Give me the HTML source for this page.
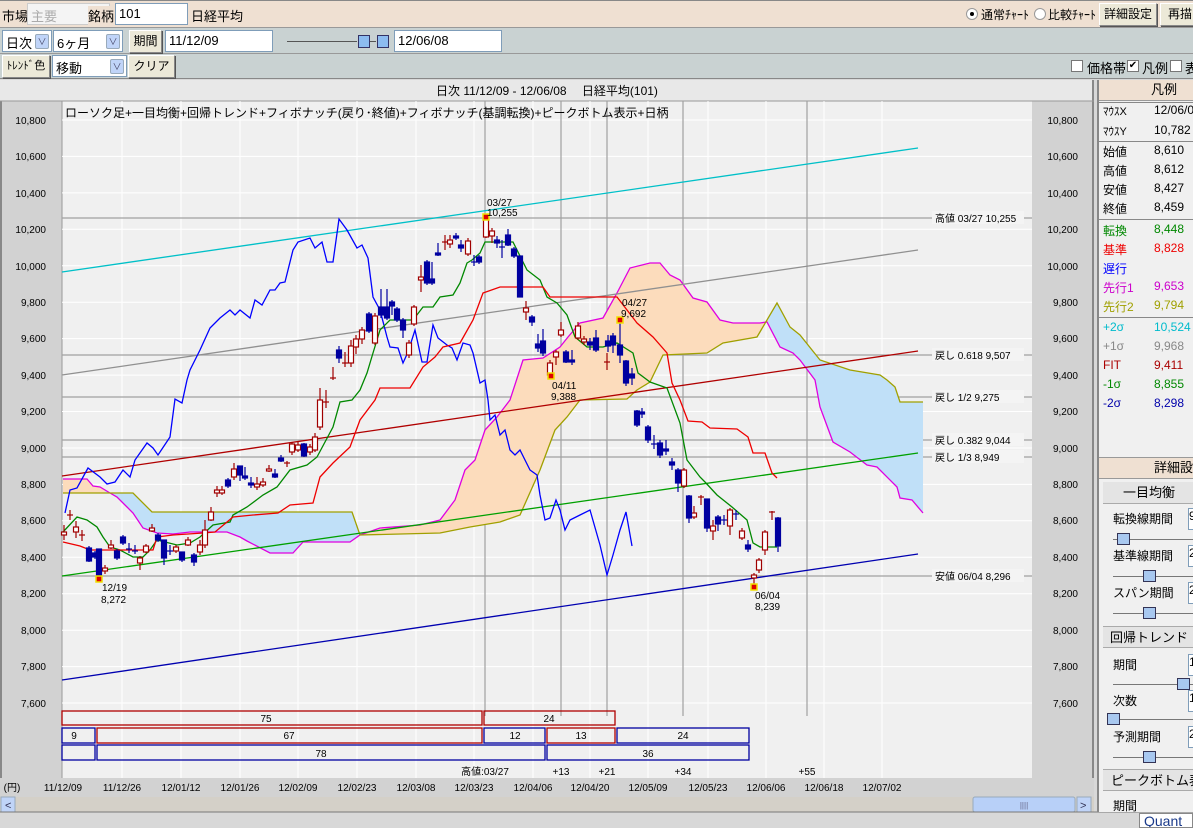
<!DOCTYPE html>
<html><head><meta charset="utf-8">
<style>
*{margin:0;padding:0;box-sizing:border-box}
body{width:1193px;height:828px;overflow:hidden;background:#d8d8d8;font-family:"Liberation Sans","Noto Sans CJK JP",sans-serif;font-size:12px;color:#000;position:relative}
.a{position:absolute}
.row{position:absolute;left:0;width:1193px}
.inp{position:absolute;background:#fff;border:1px solid #7f9db9;height:22px;padding:2px 3px;font-size:13px;white-space:nowrap}
.btn{position:absolute;background:#ece9d8;border:1px solid #888;border-top-color:#fff;border-left-color:#fff;height:23px;font-size:12px;line-height:21px;padding:0;text-align:center;white-space:nowrap;overflow:hidden;box-shadow:1px 1px 0 #555}
.dd{position:absolute;width:14px;height:15px;background:#c0d4f8;border:1px solid #9ab;border-radius:2px;top:3px;right:2px;font-size:9px;color:#446;text-align:center;line-height:14px}
.rp div{position:absolute;font-size:12px;white-space:nowrap}
</style></head><body>
<!-- row1 -->
<div class="row" style="top:0;height:28px;background:#efe0d2;border-top:1px solid #888;border-bottom:1px solid #999"></div>
<div class="a" style="left:2px;top:6px;font-size:13px">市場</div>
<div class="inp" style="left:27px;top:3px;width:83px;color:#aaa;border-color:#ccc;background:#f4f4f4">主要<div class="dd" style="background:#e4e4e4;border-color:#ddd;color:#bbb">∨</div></div>
<div class="a" style="left:88px;top:6px;font-size:13px;background:#efe0d2">銘柄</div>
<div class="inp" style="left:115px;top:3px;width:73px">101</div>
<div class="a" style="left:191px;top:6px;font-size:13px">日経平均</div>
<div class="a" style="left:966px;top:8px;width:12px;height:12px;border-radius:50%;background:#fff;border:1px solid #999"><div class="a" style="left:3px;top:3px;width:4px;height:4px;background:#000;border-radius:50%"></div></div>
<div class="a" style="left:981px;top:6px;font-size:12px">通常ﾁｬｰﾄ</div>
<div class="a" style="left:1034px;top:8px;width:12px;height:12px;border-radius:50%;background:#fff;border:1px solid #999"></div>
<div class="a" style="left:1048px;top:6px;font-size:12px">比較ﾁｬｰﾄ</div>
<div class="btn" style="left:1099px;top:3px;width:58px">詳細設定</div>
<div class="btn" style="left:1160px;top:3px;width:40px">再描</div>
<!-- row2 -->
<div class="row" style="top:28px;height:26px;background:#c9d2d2;border-bottom:1px solid #999"></div>
<div class="inp" style="left:2px;top:30px;width:50px">日次<div class="dd">∨</div></div>
<div class="inp" style="left:53px;top:30px;width:70px">6ヶ月<div class="dd">∨</div></div>
<div class="btn" style="left:129px;top:30px;width:33px">期間</div>
<div class="inp" style="left:165px;top:30px;width:108px">11/12/09</div>
<div class="a" style="left:287px;top:41px;width:70px;height:1px;background:#555"></div>
<div class="a" style="left:358px;top:35px;width:12px;height:13px;background:#8cbcf0;border:1px solid #336"></div>
<div class="a" style="left:370px;top:41px;width:6px;height:1px;background:#555"></div>
<div class="a" style="left:377px;top:35px;width:12px;height:13px;background:#8cbcf0;border:1px solid #336"></div>
<div class="inp" style="left:394px;top:30px;width:108px">12/06/08</div>
<!-- row3 -->
<div class="row" style="top:54px;height:25px;background:#c9d2d2;border-bottom:1px solid #888"></div>
<div class="btn" style="left:2px;top:55px;width:48px;font-size:11px">ﾄﾚﾝﾄﾞ色</div>
<div class="inp" style="left:52px;top:55px;width:75px">移動<div class="dd">∨</div></div>
<div class="btn" style="left:128px;top:55px;width:47px">クリア</div>
<div class="a" style="left:1071px;top:60px;width:12px;height:12px;background:#fff;border:1px solid #777"></div>
<div class="a" style="left:1087px;top:58px;font-size:13px">価格帯</div>
<div class="a" style="left:1127px;top:60px;width:12px;height:12px;background:#fff;border:1px solid #777;font-size:10px;line-height:10px;text-align:center">✔</div>
<div class="a" style="left:1142px;top:58px;font-size:13px">凡例</div>
<div class="a" style="left:1170px;top:60px;width:12px;height:12px;background:#fff;border:1px solid #777"></div>
<div class="a" style="left:1185px;top:58px;font-size:13px">表</div>

<!-- chart -->
<svg class="a" style="left:0;top:0" width="1193" height="828" xmlns="http://www.w3.org/2000/svg" font-family="Liberation Sans, Noto Sans CJK JP, sans-serif">
<rect x="0" y="80" width="1094" height="21" fill="#e8e8e8"/>
<text x="547" y="95" font-size="12" text-anchor="middle">日次 11/12/09 - 12/06/08　 日経平均(101)</text>
<rect x="0" y="101" width="62" height="677" fill="#d2d2d2"/>
<rect x="1032" y="101" width="61" height="677" fill="#d2d2d2"/>
<line x1="1" y1="101" x2="1" y2="812" stroke="#888" stroke-width="2"/>
<line x1="1093" y1="80" x2="1093" y2="812" stroke="#888" stroke-width="2"/>
<rect x="62" y="101" width="970" height="677" fill="#f0f0f0"/>
<line x1="62" y1="101" x2="62" y2="778" stroke="#999"/>
<line x1="0" y1="101" x2="1094" y2="101" stroke="#999"/>
<g stroke="#fff" stroke-width="1">
<path d="M62 120H1032M62 156.4H1032M62 192.9H1032M62 229.3H1032M62 265.8H1032M62 302.2H1032M62 338.6H1032M62 375.1H1032M62 411.5H1032M62 448H1032M62 484.4H1032M62 520.8H1032M62 557.3H1032M62 593.7H1032M62 630.2H1032M62 666.6H1032M62 703H1032"/>
<path d="M122 101V778M181 101V778M240 101V778M298 101V778M357 101V778M416 101V778M474 101V778M533 101V778M590 101V778M648 101V778M708 101V778M766 101V778M824 101V778M882 101V778"/>
</g>
<g font-size="10" text-anchor="end" fill="#000">
<text x="46" y="124">10,800</text><text x="46" y="160">10,600</text><text x="46" y="197">10,400</text><text x="46" y="233">10,200</text><text x="46" y="270">10,000</text><text x="46" y="306">9,800</text><text x="46" y="342">9,600</text><text x="46" y="379">9,400</text><text x="46" y="415">9,200</text><text x="46" y="452">9,000</text><text x="46" y="488">8,800</text><text x="46" y="524">8,600</text><text x="46" y="561">8,400</text><text x="46" y="597">8,200</text><text x="46" y="634">8,000</text><text x="46" y="670">7,800</text><text x="46" y="707">7,600</text>
<text x="1078" y="124">10,800</text><text x="1078" y="160">10,600</text><text x="1078" y="197">10,400</text><text x="1078" y="233">10,200</text><text x="1078" y="270">10,000</text><text x="1078" y="306">9,800</text><text x="1078" y="342">9,600</text><text x="1078" y="379">9,400</text><text x="1078" y="415">9,200</text><text x="1078" y="452">9,000</text><text x="1078" y="488">8,800</text><text x="1078" y="524">8,600</text><text x="1078" y="561">8,400</text><text x="1078" y="597">8,200</text><text x="1078" y="634">8,000</text><text x="1078" y="670">7,800</text><text x="1078" y="707">7,600</text>
</g>
<g stroke="#a0a0a0" stroke-width="1.2">
<path d="M62 218H1032M62 355H1032M62 397H1032M62 440H1032M62 457H1032M62 576H1032"/>
<path d="M485 101V716M561 101V716M607 101V716M683 101V716M807 101V716"/>
</g>
<defs>
<clipPath id="cp"><rect x="62" y="100" width="43" height="600"/><rect x="360" y="100" width="408" height="600"/></clipPath>
<clipPath id="cb"><rect x="105" y="100" width="255" height="600"/><rect x="768" y="100" width="160" height="600"/></clipPath>
</defs>
<polygon clip-path="url(#cp)" fill="#fcdcbc" points="63,479 87,479 93,486 100,487 110,493 117,497 127,507 133,513 143,528 157,533 173,534 190,532 227,532 240,537 247,541 270,553 293,553 303,542 350,542 360,535 380,528 420,525 440,520 455,500 465,470 475,460 485,430 497,417 510,400 523,360 543,358 560,347 568,337 580,323 603,318 617,293 630,268 650,263 660,263 670,275 680,280 693,298 707,302 720,320 733,323 760,323 767,322 780,347 793,353 800,360 815,380 820,407 833,442 850,452 867,465 877,467 897,487 900,498 912,500 923,513 923,402 900,402 895,387 887,380 880,375 850,370 820,360 800,335 790,327 777,303 757,337 723,343 707,353 663,355 650,382 637,390 627,399 580,400 567,417 555,430 540,470 520,515 500,522 470,527 440,533 360,535 352,512 152,512 133,493 63,493"/>
<polygon clip-path="url(#cb)" fill="#c0e0f8" points="63,479 87,479 93,486 100,487 110,493 117,497 127,507 133,513 143,528 157,533 173,534 190,532 227,532 240,537 247,541 270,553 293,553 303,542 350,542 360,535 380,528 420,525 440,520 455,500 465,470 475,460 485,430 497,417 510,400 523,360 543,358 560,347 568,337 580,323 603,318 617,293 630,268 650,263 660,263 670,275 680,280 693,298 707,302 720,320 733,323 760,323 767,322 780,347 793,353 800,360 815,380 820,407 833,442 850,452 867,465 877,467 897,487 900,498 912,500 923,513 923,402 900,402 895,387 887,380 880,375 850,370 820,360 800,335 790,327 777,303 757,337 723,343 707,353 663,355 650,382 637,390 627,399 580,400 567,417 555,430 540,470 520,515 500,522 470,527 440,533 360,535 352,512 152,512 133,493 63,493"/>
<g fill="none" stroke-width="1.3">
<polyline stroke="#e000e0" points="63,479 87,479 93,486 100,487 110,493 117,497 127,507 133,513 143,528 157,533 173,534 190,532 227,532 240,537 247,541 270,553 293,553 303,542 350,542 360,535 380,528 420,525 440,520 455,500 465,470 475,460 485,430 497,417 510,400 523,360 543,358 560,347 568,337 580,323 603,318 617,293 630,268 650,263 660,263 670,275 680,280 693,298 707,302 720,320 733,323 760,323 767,322 780,347 793,353 800,360 815,380 820,407 833,442 850,452 867,465 877,467 897,487 900,498 912,500 923,513"/>
<polyline stroke="#a0a000" points="63,493 133,493 152,512 352,512 360,535 440,533 470,527 500,522 520,515 540,470 555,430 567,417 580,400 627,399 637,390 650,382 663,355 707,353 723,343 757,337 777,303 790,327 800,335 820,360 850,370 880,375 887,380 895,387 900,402 923,402"/>
<line x1="62" y1="272" x2="918" y2="148" stroke="#00c0c8"/>
<line x1="62" y1="375" x2="918" y2="250" stroke="#909090"/>
<line x1="62" y1="476" x2="918" y2="351" stroke="#b00000"/>
<line x1="62" y1="576" x2="918" y2="453" stroke="#00a000"/>
<line x1="62" y1="680" x2="918" y2="554" stroke="#0000b0"/>
<polyline stroke="#0000ff" points="65,513 70,490 77,488 88,468 100,477 107,484 115,482 123,470 130,477 135,460 147,443 153,448 158,455 170,437 175,399 182,403 187,380 190,370 200,350 210,328 220,318 230,310 235,315 240,310 250,318 255,300 262,305 270,290 275,290 280,283 285,282 293,250 298,242 310,238 315,248 322,242 327,262 333,262 339,219 347,230 357,248 362,245 368,258 373,297 380,310 387,337 390,347 398,348 403,363 408,352 415,330 422,362 427,362 433,325 438,338 447,345 452,348 457,360 463,343 470,345 473,353 480,383 485,380 488,400 490,420 495,415 500,435 505,430 510,450 515,455 520,450 525,460 530,470 537,475 540,495 545,520 550,518 556,500 560,510 565,530 570,520 580,515 590,510 600,545 607,575 613,555 620,530 626,512 632,546"/>
<polyline stroke="#008800" points="63,532 77,517 87,520 97,527 103,537 110,547 120,550 133,557 143,557 150,550 157,540 177,545 190,543 200,537 213,525 230,522 233,515 247,507 263,495 277,487 290,470 307,465 317,457 333,427 340,402 352,400 360,390 367,373 373,353 380,330 390,320 413,320 423,307 433,307 440,297 453,295 460,283 467,263 472,260 480,253 485,242 513,242 527,270 540,280 547,297 557,303 567,315 575,337 587,347 603,347 617,343 633,353 638,373 650,382 667,388 680,423 687,460 700,477 705,482 717,495 732,507 747,520 753,543 760,547 777,547"/>
<polyline stroke="#ee0000" points="63,542 80,546 90,550 153,550 157,537 173,535 203,533 215,532 233,517 253,515 278,513 290,505 313,503 320,477 333,463 350,447 360,420 375,400 380,388 410,388 423,367 435,357 443,347 460,343 473,320 483,293 500,287 543,287 550,297 587,297 617,297 637,323 653,337 667,353 672,383 680,400 688,421 702,422 710,428 737,429 748,437 753,453 765,453 772,473 777,478"/>
</g>
<g stroke="#a00000" fill="#fff" stroke-width="1.2">
<path d="M64 525V540M70 510V520M76 521V538M82 530V541M105 565V574M111 540V549M140 556V570M146 544V553M152 524V532M176 545V553M188 537V546M200 540V555M205 520V548M211 507V521M217 486V497M222 486V495M234 463V480M257 477V490M263 478V487M269 465V472M287 461V467M292 442V455M298 442V452M310 444V455M315 433V452M320 388V430M326 390V408M333 367V380M345 352V367M351 340V367M356 335V354M362 327V344M375 313V345M409 340V358M414 305V326M421 265V292M445 235V250M450 235V248M468 238V256M486 216V238M492 228V243M526 301V320M550 360V377M556 350V365M561 322V337M578 322V340M584 336V345M607 353V370M684 468V488M694 506V519M701 495V505M713 520V540M730 508V535M742 528V540M754 573V585M759 558V573M765 530V555M772 511V520"/>
<rect x="61.5" y="532" width="5" height="3"/><line x1="67" y1="515" x2="73" y2="515"/><rect x="73.5" y="527" width="5" height="5"/><line x1="79" y1="535" x2="85" y2="535"/><rect x="102.5" y="568" width="5" height="3"/><rect x="108.5" y="545" width="5" height="3"/><rect x="137.5" y="558" width="5" height="5"/><rect x="143.5" y="546" width="5" height="6"/><rect x="149.5" y="528" width="5" height="3"/><rect x="173.5" y="547" width="5" height="4"/><rect x="185.5" y="540" width="5" height="5"/><rect x="197.5" y="545" width="5" height="7"/><rect x="202.5" y="530" width="5" height="15"/><rect x="208.5" y="512" width="5" height="8"/><rect x="214.5" y="490" width="5" height="3"/><rect x="219.5" y="490" width="5" height="3"/><rect x="231.5" y="469" width="5" height="8"/><rect x="254.5" y="484" width="5" height="3"/><rect x="260.5" y="482" width="5" height="3"/><rect x="266.5" y="469" width="5" height="2"/><line x1="284" y1="463" x2="290" y2="463"/><rect x="289.5" y="444" width="5" height="8"/><rect x="295.5" y="445" width="5" height="5"/><rect x="307.5" y="447" width="5" height="5"/><rect x="312.5" y="437" width="5" height="13"/><rect x="317.5" y="400" width="5" height="27"/><line x1="323" y1="402" x2="329" y2="402"/><line x1="330" y1="378" x2="336" y2="378"/><line x1="342" y1="363" x2="348" y2="363"/><rect x="348.5" y="346" width="5" height="17"/><rect x="353.5" y="339" width="5" height="8"/><rect x="359.5" y="330" width="5" height="9"/><rect x="372.5" y="316" width="5" height="27"/><rect x="406.5" y="343" width="5" height="12"/><rect x="411.5" y="307" width="5" height="17"/><rect x="418.5" y="277" width="5" height="3"/><line x1="442" y1="242" x2="448" y2="242"/><rect x="447.5" y="240" width="5" height="4"/><rect x="465.5" y="241" width="5" height="13"/><rect x="483.5" y="218" width="5" height="19"/><rect x="489.5" y="231" width="5" height="5"/><rect x="523.5" y="308" width="5" height="4"/><rect x="547.5" y="363" width="5" height="12"/><rect x="553.5" y="352" width="5" height="5"/><rect x="558.5" y="330" width="5" height="5"/><rect x="575.5" y="326" width="5" height="12"/><rect x="581.5" y="339" width="5" height="3"/><line x1="604" y1="362" x2="610" y2="362"/><rect x="681.5" y="470" width="5" height="16"/><rect x="691.5" y="513" width="5" height="4"/><line x1="698" y1="497" x2="704" y2="497"/><rect x="710.5" y="526" width="5" height="5"/><rect x="727.5" y="510" width="5" height="16"/><rect x="739.5" y="531" width="5" height="7"/><rect x="751.5" y="575" width="5" height="3"/><rect x="756.5" y="560" width="5" height="10"/><rect x="762.5" y="532" width="5" height="18"/><line x1="769" y1="512" x2="775" y2="512"/>
</g>
<g stroke="#0000a0" fill="#0000a0" stroke-width="1.2">
<path d="M89 546V562M95 551V559M99 563V579M117 549V560M123 535V545M129 543V553M135 545V554M158 533V542M164 540V565M170 545V555M182 552V562M194 553V566M228 478V488M240 467V481M245 467V480M251 477V488M275 469V478M281 455V462M304 443V457M339 346V363M369 312V333M381 289V318M387 289V320M392 300V315M397 307V322M403 318V338M427 260V285M432 262V285M438 243V256M456 233V240M461 240V252M474 255V266M479 255V264M497 236V248M502 240V258M508 229V246M514 247V258M520 256V297M532 315V326M538 334V352M543 329V356M566 350V363M572 350V365M590 338V350M596 330V352M608 335V352M613 333V353M620 320V363M626 360V386M632 368V385M637 410V427M642 408V418M648 425V443M654 435V449M660 440V458M666 440V455M672 458V470M678 468V492M689 495V523M707 499V532M718 515V531M724 515V525M736 510V520M748 540V552M778 517V552"/>
<rect x="86.5" y="548" width="5" height="13"/><rect x="92.5" y="553" width="5" height="4"/><rect x="96.5" y="549" width="5" height="28"/><rect x="114.5" y="551" width="5" height="7"/><rect x="120.5" y="537" width="5" height="6"/><line x1="126" y1="549" x2="132" y2="549"/><line x1="132" y1="551" x2="138" y2="551"/><rect x="155.5" y="535" width="5" height="5"/><rect x="161.5" y="540" width="5" height="18"/><line x1="167" y1="551" x2="173" y2="551"/><rect x="179.5" y="552" width="5" height="8"/><rect x="191.5" y="555" width="5" height="7"/><rect x="225.5" y="480" width="5" height="6"/><rect x="237.5" y="466" width="5" height="9"/><rect x="242.5" y="476" width="5" height="2"/><rect x="248.5" y="483" width="5" height="2"/><rect x="272.5" y="474" width="5" height="3"/><rect x="278.5" y="458" width="5" height="3"/><rect x="301.5" y="444" width="5" height="12"/><rect x="336.5" y="350" width="5" height="8"/><rect x="366.5" y="314" width="5" height="17"/><rect x="378.5" y="307" width="5" height="8"/><rect x="384.5" y="307" width="5" height="11"/><rect x="389.5" y="302" width="5" height="4"/><rect x="394.5" y="309" width="5" height="11"/><rect x="400.5" y="320" width="5" height="10"/><rect x="424.5" y="262" width="5" height="21"/><rect x="429.5" y="279" width="5" height="4"/><rect x="435.5" y="253" width="5" height="2"/><rect x="453.5" y="236" width="5" height="2"/><rect x="458.5" y="245" width="5" height="3"/><line x1="471" y1="262" x2="477" y2="262"/><rect x="476.5" y="257" width="5" height="5"/><rect x="494.5" y="240" width="5" height="3"/><line x1="499" y1="247" x2="505" y2="247"/><rect x="505.5" y="235" width="5" height="10"/><rect x="511.5" y="249" width="5" height="7"/><rect x="517.5" y="256" width="5" height="41"/><rect x="529.5" y="317" width="5" height="5"/><rect x="535.5" y="344" width="5" height="4"/><rect x="540.5" y="341" width="5" height="12"/><rect x="563.5" y="352" width="5" height="10"/><rect x="569.5" y="360" width="5" height="2"/><rect x="587.5" y="342" width="5" height="3"/><rect x="593.5" y="338" width="5" height="12"/><rect x="605.5" y="341" width="5" height="5"/><rect x="610.5" y="336" width="5" height="9"/><rect x="617.5" y="345" width="5" height="10"/><rect x="623.5" y="361" width="5" height="22"/><rect x="629.5" y="374" width="5" height="4"/><rect x="634.5" y="411" width="5" height="14"/><rect x="639.5" y="412" width="5" height="2"/><rect x="645.5" y="427" width="5" height="13"/><line x1="651" y1="444" x2="657" y2="444"/><rect x="657.5" y="443" width="5" height="12"/><rect x="663.5" y="449" width="5" height="2"/><rect x="669.5" y="462" width="5" height="3"/><rect x="675.5" y="470" width="5" height="13"/><rect x="686.5" y="496" width="5" height="22"/><rect x="704.5" y="499" width="5" height="29"/><rect x="715.5" y="517" width="5" height="7"/><line x1="721" y1="520" x2="727" y2="520"/><line x1="733" y1="514" x2="739" y2="514"/><rect x="745.5" y="545" width="5" height="4"/><rect x="775.5" y="518" width="5" height="28"/>
</g>
<g fill="#e00000" stroke="#f0e000" stroke-width="1.5">
<rect x="483" y="214" width="6" height="6"/><rect x="96" y="576" width="6" height="6"/><rect x="617" y="317" width="6" height="6"/><rect x="548" y="373" width="6" height="6"/><rect x="751" y="584" width="6" height="6"/>
</g>
<g font-size="10" fill="#000">
<text x="487" y="206">03/27</text><text x="487" y="216">10,255</text>
<text x="102" y="591">12/19</text><text x="101" y="603">8,272</text>
<text x="552" y="389">04/11</text><text x="551" y="400">9,388</text>
<text x="622" y="306">04/27</text><text x="621" y="317">9,692</text>
<text x="755" y="599">06/04</text><text x="755" y="610">8,239</text>
</g>
<g font-size="10" fill="#000">
<rect x="932" y="211" width="92" height="13" fill="#f4f4f4"/><text x="935" y="222">高値 03/27  10,255</text>
<rect x="932" y="348" width="92" height="13" fill="#f4f4f4"/><text x="935" y="359">戻し 0.618  9,507</text>
<rect x="932" y="390" width="92" height="13" fill="#f4f4f4"/><text x="935" y="401">戻し 1/2      9,275</text>
<rect x="932" y="433" width="92" height="13" fill="#f4f4f4"/><text x="935" y="444">戻し 0.382  9,044</text>
<rect x="932" y="450" width="92" height="13" fill="#f4f4f4"/><text x="935" y="461">戻し 1/3      8,949</text>
<rect x="932" y="569" width="92" height="13" fill="#f4f4f4"/><text x="935" y="580">安値 06/04  8,296</text>
</g>
<text x="65" y="117" font-size="12">ローソク足+一目均衡+回帰トレンド+フィボナッチ(戻り･終値)+フィボナッチ(基調転換)+ピークボトム表示+日柄</text>
<g fill="none" stroke-width="1.3">
<g stroke="#b00000"><rect x="62" y="711" width="420" height="14"/><rect x="484" y="711" width="131" height="14"/><rect x="97" y="728" width="385" height="15"/><rect x="547" y="728" width="68" height="15"/></g>
<g stroke="#0000a0"><rect x="62" y="728" width="33" height="15"/><rect x="484" y="728" width="61" height="15"/><rect x="617" y="728" width="132" height="15"/><rect x="62" y="745" width="33" height="15"/><rect x="97" y="745" width="448" height="15"/><rect x="547" y="745" width="202" height="15"/></g>
</g>
<g font-size="10" text-anchor="middle">
<text x="266" y="722">75</text><text x="549" y="722">24</text><text x="74" y="739">9</text><text x="289" y="739">67</text><text x="515" y="739">12</text><text x="581" y="739">13</text><text x="683" y="739">24</text><text x="321" y="757">78</text><text x="648" y="757">36</text>
<text x="485" y="775">高値:03/27</text><text x="561" y="775">+13</text><text x="607" y="775">+21</text><text x="683" y="775">+34</text><text x="807" y="775">+55</text>
</g>
<rect x="0" y="778" width="1094" height="19" fill="#d2d2d2"/>
<g font-size="10" text-anchor="middle">
<text x="12" y="791">(円)</text><text x="63" y="791">11/12/09</text><text x="122" y="791">11/12/26</text><text x="181" y="791">12/01/12</text><text x="240" y="791">12/01/26</text><text x="298" y="791">12/02/09</text><text x="357" y="791">12/02/23</text><text x="416" y="791">12/03/08</text><text x="474" y="791">12/03/23</text><text x="533" y="791">12/04/06</text><text x="590" y="791">12/04/20</text><text x="648" y="791">12/05/09</text><text x="708" y="791">12/05/23</text><text x="766" y="791">12/06/06</text><text x="824" y="791">12/06/18</text><text x="882" y="791">12/07/02</text>
</g>
<rect x="0" y="797" width="1094" height="15" fill="#d4d0c8"/>
<rect x="1" y="797" width="14" height="15" fill="#c0d4f8" stroke="#9ab"/>
<text x="5" y="809" font-size="11" fill="#335">&lt;</text>
<rect x="973" y="797" width="102" height="15" rx="2" fill="#b8d0f8" stroke="#9ab"/>
<text x="1024" y="808" font-size="8" fill="#668" text-anchor="middle">||||</text>
<rect x="1077" y="797" width="14" height="15" fill="#c0d4f8" stroke="#9ab"/>
<text x="1080" y="809" font-size="11" fill="#335">&gt;</text>
<line x1="0" y1="812" x2="1193" y2="812" stroke="#777"/>
</svg>

<div class="a rp" style="left:1097px;top:80px;width:96px;height:375px;background:#f0f0f0;border-left:2px solid #888">
<div style="left:0;top:0;width:96px;height:21px;background:#efe0d2;border-bottom:1px solid #999;line-height:20px;font-size:13px;padding-left:52px">凡例</div>
<div style="left:0;top:22px;width:96px;height:1px;background:#888"></div>
<div style="left:4px;top:23px;font-size:11px">ﾏｳｽX</div><div style="left:55px;top:23px">12/06/0</div>
<div style="left:4px;top:43px;font-size:11px">ﾏｳｽY</div><div style="left:55px;top:43px">10,782</div>
<div style="left:0;top:61px;width:96px;height:1px;background:#888"></div>
<div style="left:4px;top:63px">始値</div><div style="left:55px;top:63px">8,610</div>
<div style="left:4px;top:82px">高値</div><div style="left:55px;top:82px">8,612</div>
<div style="left:4px;top:101px">安値</div><div style="left:55px;top:101px">8,427</div>
<div style="left:4px;top:120px">終値</div><div style="left:55px;top:120px">8,459</div>
<div style="left:0;top:139px;width:96px;height:1px;background:#888"></div>
<div style="left:4px;top:142px;color:#080">転換</div><div style="left:55px;top:142px;color:#080">8,448</div>
<div style="left:4px;top:161px;color:#e00">基準</div><div style="left:55px;top:161px;color:#e00">8,828</div>
<div style="left:4px;top:180px;color:#00f">遅行</div>
<div style="left:4px;top:199px;color:#c0c">先行1</div><div style="left:55px;top:199px;color:#c0c">9,653</div>
<div style="left:4px;top:218px;color:#a0a000">先行2</div><div style="left:55px;top:218px;color:#a0a000">9,794</div>
<div style="left:0;top:237px;width:96px;height:1px;background:#888"></div>
<div style="left:4px;top:240px;color:#0bc">+2σ</div><div style="left:55px;top:240px;color:#0bc">10,524</div>
<div style="left:4px;top:259px;color:#888">+1σ</div><div style="left:55px;top:259px;color:#888">9,968</div>
<div style="left:4px;top:278px;color:#a00">FIT</div><div style="left:55px;top:278px;color:#a00">9,411</div>
<div style="left:4px;top:297px;color:#080">-1σ</div><div style="left:55px;top:297px;color:#080">8,855</div>
<div style="left:4px;top:316px;color:#00a">-2σ</div><div style="left:55px;top:316px;color:#00a">8,298</div>
</div>
<div class="a rp" style="left:1097px;top:455px;width:96px;height:357px;background:#f0f0f0;border-left:2px solid #888">
<div style="left:0;top:2px;width:96px;height:22px;background:#efe0d2;border-top:1px solid #999;border-bottom:1px solid #999;line-height:20px;padding-left:55px;font-size:13px">詳細設</div>
<div style="left:4px;top:27px;width:92px;height:22px;background:#e4e4e4;border-bottom:1px solid #aaa;text-align:center;line-height:22px;font-size:13px">一目均衡</div>
<div style="left:14px;top:55px">転換線期間</div><div style="left:89px;top:53px;width:10px;height:22px;background:#fff;border:1px solid #7f9db9">9</div>
<div style="left:14px;top:84px;width:80px;height:1px;background:#777"></div><div style="left:18px;top:78px;width:13px;height:12px;background:#a8c8f0;border:1px solid #335"></div>
<div style="left:14px;top:92px">基準線期間</div><div style="left:89px;top:90px;width:10px;height:22px;background:#fff;border:1px solid #7f9db9">2</div>
<div style="left:14px;top:121px;width:80px;height:1px;background:#777"></div><div style="left:44px;top:115px;width:13px;height:12px;background:#a8c8f0;border:1px solid #335"></div>
<div style="left:14px;top:129px">スパン期間</div><div style="left:89px;top:127px;width:10px;height:22px;background:#fff;border:1px solid #7f9db9">2</div>
<div style="left:14px;top:158px;width:80px;height:1px;background:#777"></div><div style="left:44px;top:152px;width:13px;height:12px;background:#a8c8f0;border:1px solid #335"></div>
<div style="left:4px;top:171px;width:92px;height:22px;background:#e4e4e4;border-top:1px solid #aaa;border-bottom:1px solid #aaa;text-align:center;line-height:22px;font-size:13px">回帰トレンド</div>
<div style="left:14px;top:201px">期間</div><div style="left:89px;top:199px;width:10px;height:22px;background:#fff;border:1px solid #7f9db9">1</div>
<div style="left:14px;top:229px;width:80px;height:1px;background:#777"></div><div style="left:78px;top:223px;width:13px;height:12px;background:#a8c8f0;border:1px solid #335"></div>
<div style="left:14px;top:237px">次数</div><div style="left:89px;top:235px;width:10px;height:22px;background:#fff;border:1px solid #7f9db9">1</div>
<div style="left:14px;top:264px;width:80px;height:1px;background:#777"></div><div style="left:8px;top:258px;width:13px;height:12px;background:#a8c8f0;border:1px solid #335"></div>
<div style="left:14px;top:273px">予測期間</div><div style="left:89px;top:271px;width:10px;height:22px;background:#fff;border:1px solid #7f9db9">2</div>
<div style="left:14px;top:302px;width:80px;height:1px;background:#777"></div><div style="left:44px;top:296px;width:13px;height:12px;background:#a8c8f0;border:1px solid #335"></div>
<div style="left:4px;top:314px;width:92px;height:22px;background:#e4e4e4;border-top:1px solid #aaa;border-bottom:1px solid #aaa;line-height:22px;padding-left:8px;font-size:13px;overflow:hidden">ピークボトム表</div>
<div style="left:14px;top:342px">期間</div>
</div>
<div class="a" style="left:1139px;top:813px;width:54px;height:15px;background:#fff;border:1px solid #888;font-size:14px;color:#1a3a8a;padding-left:4px;line-height:15px;overflow:hidden">Quant</div>
</body></html>
